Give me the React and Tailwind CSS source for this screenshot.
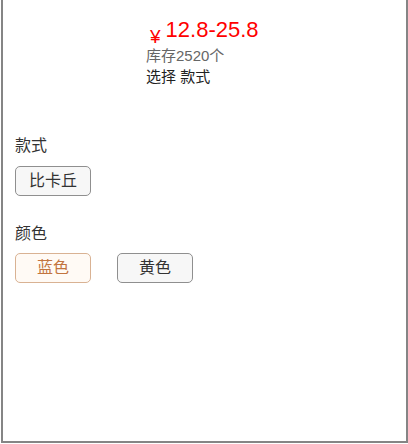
import React, { useState } from 'react';

const styles = ['比卡丘'];
const colors = ['蓝色', '黄色'];

const Option = ({ label, active, onClick }) => (
    <button
        onClick={onClick}
        className={`w-[76px] h-[30px] rounded-[5px] border text-[16px] leading-none ${
            active
                ? 'border-[#d9b293] bg-[#fffaf5] text-[#c2743f]'
                : 'border-[#8f8f8f] bg-[#f7f7f7] text-[#333]'
        }`}
    >
        {label}
    </button>
);

const App = () => {
    const [style, setStyle] = useState('');
    const [color, setColor] = useState('蓝色');

    return (
        <div
            className="ml-[1px] w-[407px] h-[443px] border-x-2 border-b-2 border-[#858585] bg-white"
            style={{ fontFamily: '"Liberation Sans", Arial, "Noto Sans CJK SC", sans-serif' }}
        >
            <div className="pl-[143px] pt-[15px]">
                <div className="flex items-baseline h-[30px] text-[#f00]">
                    <span className="text-[19px] leading-none ml-[4px] mr-[5px] translate-y-[6px]">¥</span>
                    <span className="text-[22px] leading-[30px]">12.8-25.8</span>
                </div>
                <div className="text-[15px] leading-[21px] text-[#666]">库存2520个</div>
                <div className="text-[15px] leading-[21px] text-[#222]">选择 款式</div>
            </div>

            <div className="px-[12px] mt-[49px]">
                <div className="text-[16px] leading-[20px] text-[#333]">款式</div>
                <div className="flex gap-[26px] mt-[10px]">
                    {styles.map((s) => (
                        <Option key={s} label={s} active={style === s} onClick={() => setStyle(s)} />
                    ))}
                </div>

                <div className="text-[16px] leading-[20px] text-[#333] mt-[28px]">颜色</div>
                <div className="flex gap-[26px] mt-[9px]">
                    {colors.map((c) => (
                        <Option key={c} label={c} active={color === c} onClick={() => setColor(c)} />
                    ))}
                </div>
            </div>
        </div>
    );
};

export default App;
